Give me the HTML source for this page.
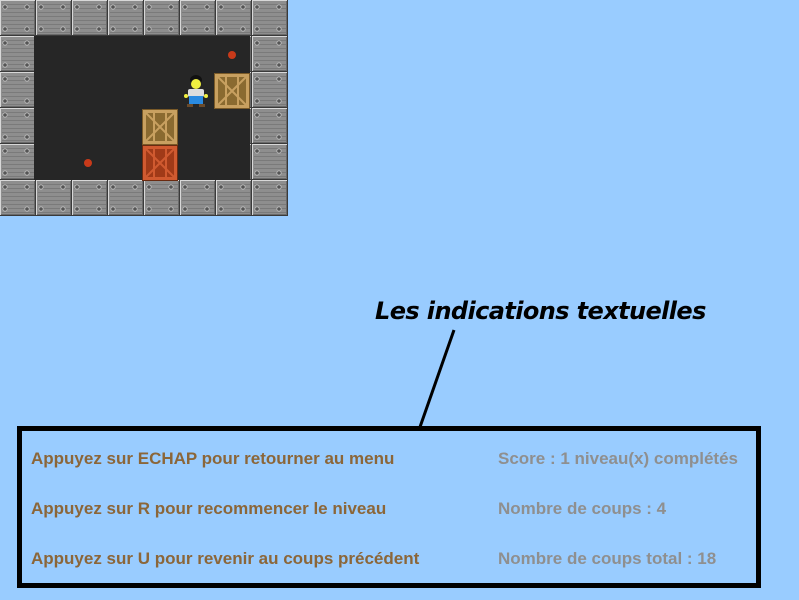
<!DOCTYPE html>
<html><head><meta charset="utf-8"><style>
body{margin:0;width:799px;height:600px;background:#99ccff;position:relative;overflow:hidden;font-family:"Liberation Sans",sans-serif}
.t{position:absolute;font-weight:bold;font-size:17px;white-space:nowrap}
.b{color:#8b6639}.g{color:#8f8f8f}
</style></head><body>
<svg width="290" height="218" style="position:absolute;left:0;top:0">
<defs>
<pattern id="wall" width="36" height="36" patternUnits="userSpaceOnUse">
<rect width="36" height="36" fill="#3a3a3a"/>
<rect x="0" y="0" width="35" height="35" fill="#d8d8d8"/>
<rect x="1" y="1" width="34" height="34" fill="#6a6a6a"/>
<rect x="1" y="1" width="33" height="33" fill="#8e8e8e"/>
<rect x="2" y="4" width="32" height="1" fill="#7a7a7a"/>
<rect x="2" y="8" width="32" height="1" fill="#7a7a7a"/>
<rect x="2" y="12" width="32" height="1" fill="#7a7a7a"/>
<rect x="2" y="16" width="32" height="1" fill="#7a7a7a"/>
<rect x="2" y="20" width="32" height="1" fill="#7a7a7a"/>
<rect x="2" y="24" width="32" height="1" fill="#7a7a7a"/>
<rect x="2" y="28" width="32" height="1" fill="#7a7a7a"/>
<rect x="2" y="32" width="32" height="1" fill="#7a7a7a"/>
<circle cx="5" cy="7" r="2.2" fill="#555" stroke="#c0c0c0" stroke-width="0.8"/>
<circle cx="27" cy="7" r="2.2" fill="#555" stroke="#c0c0c0" stroke-width="0.8"/>
<circle cx="5" cy="29" r="2.2" fill="#555" stroke="#c0c0c0" stroke-width="0.8"/>
<circle cx="27" cy="29" r="2.2" fill="#555" stroke="#c0c0c0" stroke-width="0.8"/>
</pattern>
<g id="box">
<rect width="36" height="36" fill="#7a5a28"/>
<rect x="1" y="1" width="34" height="34" fill="#c8a060"/>
<rect x="4" y="4" width="28" height="28" fill="#8a6a30"/>
<path d="M4 4L32 32M32 4L4 32M12 4V32M24 4V32" stroke="#c8a060" stroke-width="2"/>
</g>
<g id="rbox">
<rect width="36" height="36" fill="#6a2a10"/>
<rect x="1" y="1" width="34" height="34" fill="#d05a30"/>
<rect x="4" y="4" width="28" height="28" fill="#a03a18"/>
<path d="M4 4L32 32M32 4L4 32M12 4V32M24 4V32" stroke="#d05a30" stroke-width="2"/>
</g>
</defs>
<rect width="288" height="216" fill="url(#wall)"/>
<rect x="34" y="36" width="216" height="144" fill="#262626"/>
<circle cx="232" cy="55" r="4" fill="#c83a1a"/>
<circle cx="88" cy="163" r="4" fill="#c83a1a"/>
<use href="#box" x="214" y="73"/>
<use href="#box" x="142" y="109"/>
<use href="#rbox" x="142" y="145"/>
<g>
<ellipse cx="196" cy="80" rx="6" ry="5" fill="#111"/>
<circle cx="196" cy="84" r="5" fill="#f0f040"/>
<rect x="188" y="89" width="16" height="8" rx="2" fill="#ddd"/>
<circle cx="186" cy="96" r="2" fill="#f0f040"/>
<circle cx="206" cy="96" r="2" fill="#f0f040"/>
<rect x="189" y="96" width="14" height="8" fill="#2a8ae0"/>
<rect x="187" y="104" width="6" height="3" fill="#6a4a2a"/>
<rect x="199" y="104" width="6" height="3" fill="#6a4a2a"/>
</g>
</svg>
<div class="t" style="left:375px;top:297px;font-size:24px;font-style:italic;color:#000;letter-spacing:-0.6px;font-family:'DejaVu Sans',sans-serif">Les indications textuelles</div>
<svg width="799" height="600" style="position:absolute;left:0;top:0">
<line x1="454" y1="330" x2="420" y2="427" stroke="#000" stroke-width="3"/>
</svg>
<div style="position:absolute;left:17px;top:426px;width:734px;height:152px;border:5px solid #000"></div>
<div class="t b" style="left:31px;top:449px">Appuyez sur ECHAP pour retourner au menu</div>
<div class="t b" style="left:31px;top:499px">Appuyez sur R pour recommencer le niveau</div>
<div class="t b" style="left:31px;top:549px">Appuyez sur U pour revenir au coups précédent</div>
<div class="t g" style="left:498px;top:449px">Score : 1 niveau(x) complétés</div>
<div class="t g" style="left:498px;top:499px">Nombre de coups : 4</div>
<div class="t g" style="left:498px;top:549px">Nombre de coups total : 18</div>
</body></html>
